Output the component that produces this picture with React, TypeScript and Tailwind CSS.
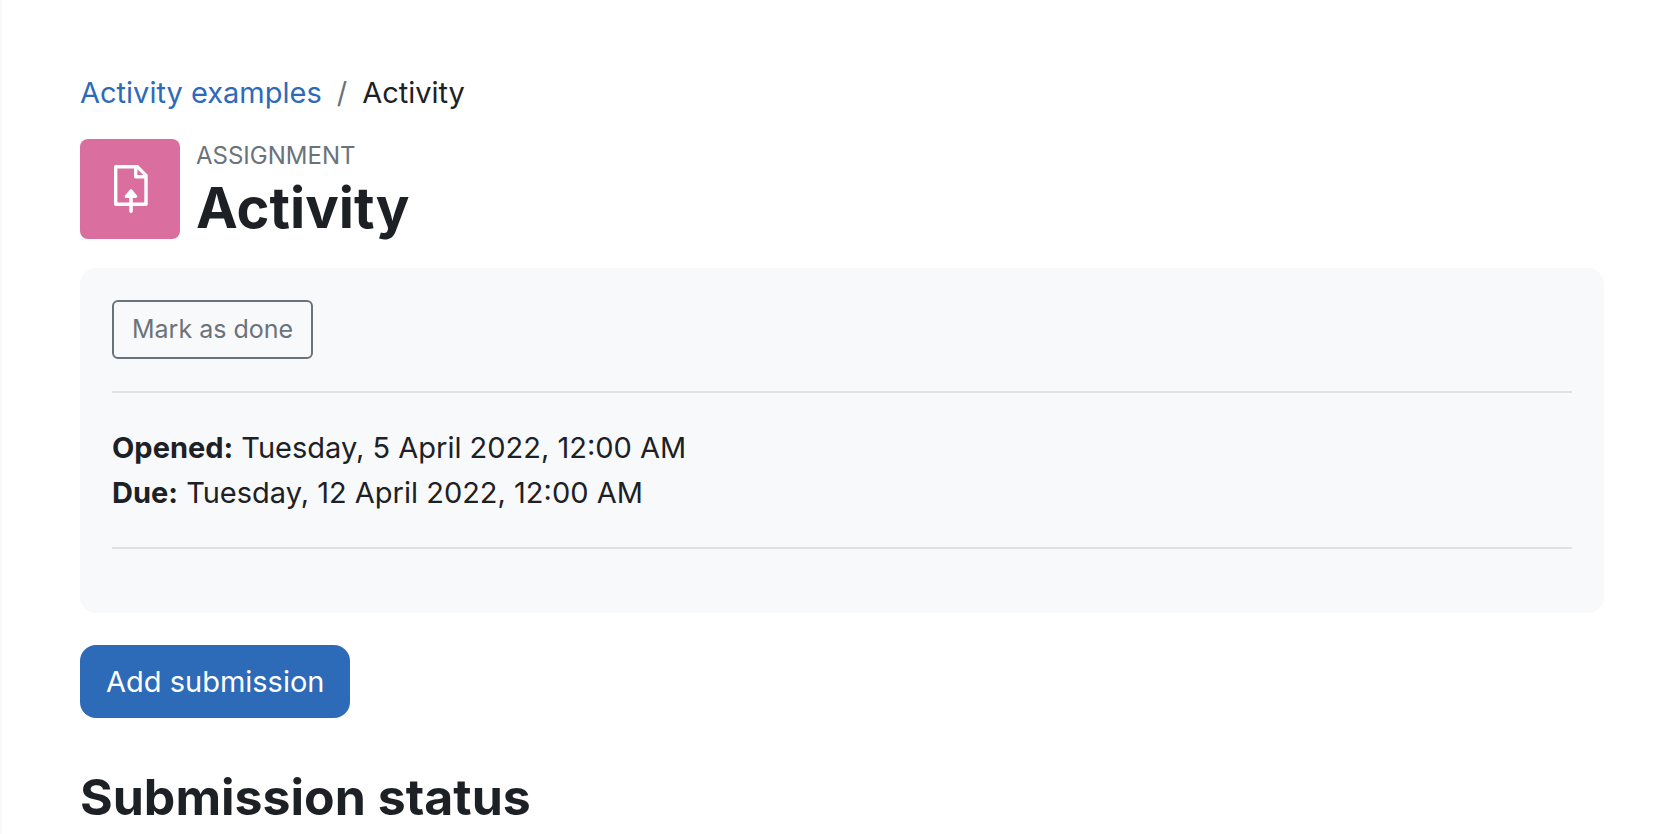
import React from 'react';

interface ActivityDate {
  label: string;
  value: string;
}

const dates: ActivityDate[] = [
  { label: 'Opened:', value: 'Tuesday, 5 April 2022, 12:00 AM' },
  { label: 'Due:', value: 'Tuesday, 12 April 2022, 12:00 AM' },
];

const AssignmentIcon: React.FC = () => (
  <svg viewBox="0 0 48 48" className="size-12" fill="none" aria-hidden="true">
    <path d="M9.7 1.7h21.6l8.7 8.7v28.9H9.7z" stroke="white" strokeWidth="3.4" strokeLinejoin="round" />
    <path d="M29.7 2v9.8h10" stroke="white" strokeWidth="3.4" strokeLinejoin="round" />
    <path d="M25 46.2V32" stroke="white" strokeWidth="3.6" strokeLinecap="round" />
    <path d="M25 25.6l4.8 5.8h-9.6z" fill="white" stroke="white" strokeWidth="3" strokeLinejoin="round" />
  </svg>
);

const Breadcrumb: React.FC = () => (
  <nav aria-label="Breadcrumb">
    <ol className="flex gap-[15px] text-[29px] leading-[45px]">
      <li>
        <a href="#" className="text-[#2d6bb9] hover:underline">Activity examples</a>
      </li>
      <li aria-hidden="true" className="text-[#6a737b]">/</li>
      <li aria-current="page">Activity</li>
    </ol>
  </nav>
);

export default function App() {
  return (
    <main className="min-h-screen border-l-2 border-[#f8f9fa] bg-white pt-[70px] pr-[52px] pl-[78px] font-['Inter',sans-serif] text-[#1d2125]">
      <Breadcrumb />

      <header className="mt-6 flex gap-4">
        <div className="flex size-[100px] shrink-0 items-center justify-center rounded-lg bg-[#da6e9f]">
          <AssignmentIcon />
        </div>
        <div>
          <div className="text-2xl leading-[34px] text-[#6a737b] uppercase">Assignment</div>
          <h1 className="text-[56px] leading-[71px] font-bold">Activity</h1>
        </div>
      </header>

      <section className="mt-6 rounded-2xl bg-[#f8f9fb] px-8 pt-8 pb-16">
        <button
          type="button"
          className="rounded-md border-2 border-[#6a737b] px-[18px] py-3 text-[25px] leading-[31px] text-[#6a737b]"
        >
          Mark as done
        </button>
        <div className="mt-8 border-y-2 border-[#dee2e6] py-8 text-[29px] leading-[45px]">
          {dates.map((date) => (
            <div key={date.label}>
              <strong className="font-bold">{date.label}</strong> {date.value}
            </div>
          ))}
        </div>
      </section>

      <button
        type="button"
        className="mt-8 rounded-2xl bg-[#2d6bb9] px-[26px] py-3 text-[29px] leading-[49px] text-white"
      >
        Add submission
      </button>

      <h2 className="mt-12 text-[50px] leading-[62px] font-bold">Submission status</h2>
    </main>
  );
}
